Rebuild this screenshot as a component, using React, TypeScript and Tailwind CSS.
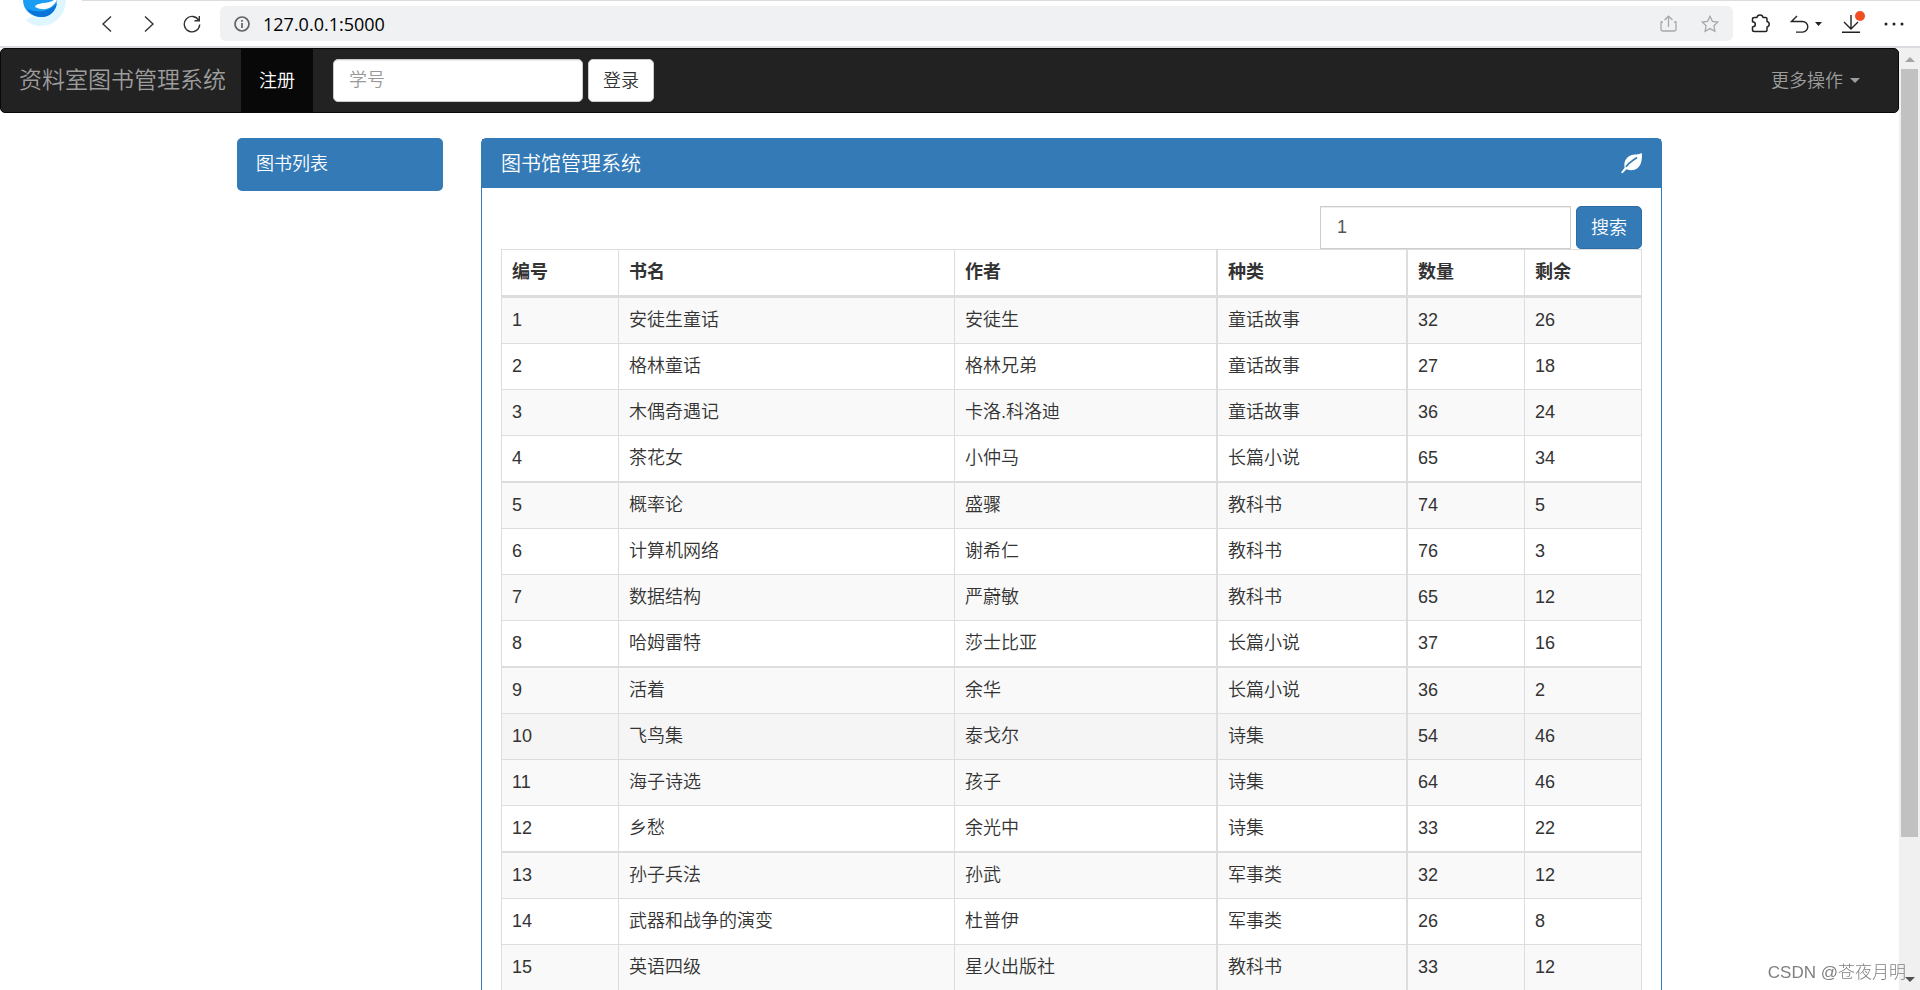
import { useState } from 'react';

interface Book {
  id: number;
  name: string;
  author: string;
  category: string;
  total: number;
  left: number;
}

const BOOKS: Book[] = [
  { id: 1, name: '安徒生童话', author: '安徒生', category: '童话故事', total: 32, left: 26 },
  { id: 2, name: '格林童话', author: '格林兄弟', category: '童话故事', total: 27, left: 18 },
  { id: 3, name: '木偶奇遇记', author: '卡洛.科洛迪', category: '童话故事', total: 36, left: 24 },
  { id: 4, name: '茶花女', author: '小仲马', category: '长篇小说', total: 65, left: 34 },
  { id: 5, name: '概率论', author: '盛骤', category: '教科书', total: 74, left: 5 },
  { id: 6, name: '计算机网络', author: '谢希仁', category: '教科书', total: 76, left: 3 },
  { id: 7, name: '数据结构', author: '严蔚敏', category: '教科书', total: 65, left: 12 },
  { id: 8, name: '哈姆雷特', author: '莎士比亚', category: '长篇小说', total: 37, left: 16 },
  { id: 9, name: '活着', author: '余华', category: '长篇小说', total: 36, left: 2 },
  { id: 10, name: '飞鸟集', author: '泰戈尔', category: '诗集', total: 54, left: 46 },
  { id: 11, name: '海子诗选', author: '孩子', category: '诗集', total: 64, left: 46 },
  { id: 12, name: '乡愁', author: '余光中', category: '诗集', total: 33, left: 22 },
  { id: 13, name: '孙子兵法', author: '孙武', category: '军事类', total: 32, left: 12 },
  { id: 14, name: '武器和战争的演变', author: '杜普伊', category: '军事类', total: 26, left: 8 },
  { id: 15, name: '英语四级', author: '星火出版社', category: '教科书', total: 33, left: 12 },
];

const COLUMNS = [
  { title: '编号', width: 'w-[118px]', line: 'border-l border-r' },
  { title: '书名', width: 'w-[336px]', line: 'border-r' },
  { title: '作者', width: 'w-[263px]', line: 'border-r-2' },
  { title: '种类', width: 'w-[190px]', line: 'border-r-2' },
  { title: '数量', width: 'w-[117px]', line: 'border-r' },
  { title: '剩余', width: 'w-[117px]', line: 'border-r' },
];

function BrowserBar() {
  const [url, setUrl] = useState('127.0.0.1:5000');

  return (
    <header className="relative flex h-12 shrink-0 items-center border-t border-b-2 border-t-[#dddddd] border-b-[#dcdce0] bg-white pr-4">
      {/* -top-px lets the logo cover the tab strip's line */}
      <svg className="absolute -top-px left-0 h-10 w-21" viewBox="0 0 84 40" aria-hidden="true">
        <path d="M0 0h82c-2 18-14 32-30 37H0z" fill="#ffffff" />
        <path d="M66 0c0 14-11 26-25 26-6 0-11-2-15-6 4-3 8-4 12-4 8 0 14-6 16-16z" fill="#dff5ff" />
        <path d="M23 0c0 10 8 17 18 17 9 0 15-7 16-17z" fill="#1a9df5" />
        <path d="M27 9c4 6 10 8 15 8 8 0 14-6 15-14-7 8-17 11-30 6z" fill="#0873d8" />
        <path d="M35 7c1-3 4-3 8-4 4 0 8-1 11-3h3c-4 8-12 12-22 7z" fill="#ffffff" />
      </svg>
      <div className="ml-24 flex items-center gap-[23px] text-[#333333]">
        <button aria-label="后退" className="p-px">
          <svg className="size-[18px]" viewBox="0 0 18 18" fill="none" stroke="currentColor" strokeWidth="1.4">
            <path d="M14 1.5 6 9l8 7.5" />
          </svg>
        </button>
        <button aria-label="前进" className="p-px">
          <svg className="size-[18px]" viewBox="0 0 18 18" fill="none" stroke="currentColor" strokeWidth="1.4">
            <path d="m5 1.5 8 7.5-8 7.5" />
          </svg>
        </button>
        <button aria-label="刷新" className="p-px">
          <svg className="size-[18px]" viewBox="0 0 18 18" fill="none" stroke="currentColor" strokeWidth="1.4">
            <path d="M15.8 5.5A7.7 7.7 0 1 0 16.7 9.5M16.3 1v4.7h-4.8" />
          </svg>
        </button>
      </div>
      <div className="ml-[18px] flex h-[35px] flex-1 items-center rounded-md bg-[#f0f1f3] px-[14px]">
        <svg className="size-4 shrink-0" viewBox="0 0 16 16" fill="none" stroke="#5f6368" strokeWidth="1.7" aria-hidden="true">
          <circle cx="8" cy="8" r="7" />
          <path d="M8 7v5M8 4v1.8" />
        </svg>
        <input
          aria-label="地址"
          value={url}
          onChange={(e) => setUrl(e.target.value)}
          className="ml-[13px] min-w-0 flex-1 bg-transparent font-['Open_Sans','Noto_Sans',sans-serif] text-lg font-normal text-black outline-none"
        />
        <button aria-label="分享" className="mr-6 text-[#a8a8a8]">
          <svg className="size-[17px]" viewBox="0 0 17 17" fill="none" stroke="currentColor" strokeWidth="1.3">
            <path d="M8.5 12V1.5M4.5 5l4-3.8 4 3.8M3 7H1v7q0 2 2 2h11q2 0 2-2V7h-2" />
          </svg>
        </button>
        <button aria-label="收藏" className="text-[#a8a8a8]">
          <svg className="size-[18px]" viewBox="0 0 18 18" fill="none" stroke="currentColor" strokeWidth="1.3">
            <path d="m9 1.3 2.4 5 5.5.7-4 3.8 1 5.5L9 13.6l-4.9 2.7 1-5.5-4-3.8 5.5-.7z" />
          </svg>
        </button>
      </div>
      <div className="ml-[18px] flex items-center gap-5 text-[#222222]">
        <button aria-label="扩展">
          <svg className="size-[19px]" viewBox="0 0 19 19" fill="none" stroke="currentColor" strokeWidth="1.5" strokeLinejoin="round">
            <path d="M3.5 3.5H6c.5-3.3 5.5-3.3 6 0h2.5q1.5 0 1.5 1.5v2.5c3 .6 3 5 0 5.5v3q0 1.5-1.5 1.5h-11Q1.5 17.5 1.5 16v-3c3.8-.3 3.8-5 0-5.3V5q0-1.5 2-1.5z" />
          </svg>
        </button>
        <button aria-label="撤销" className="flex items-center gap-[6px]">
          <svg className="h-[18px] w-[19px]" viewBox="0 0 19 18" fill="none" stroke="currentColor" strokeWidth="1.4">
            <path d="M7 1 1.5 6.5h11a5.3 5.3 0 0 1 0 10.6H6" />
          </svg>
          <svg className="h-1 w-[7px]" viewBox="0 0 7 4" fill="currentColor">
            <path d="M0 0h7L3.5 4z" />
          </svg>
        </button>
        <button aria-label="下载" className="relative">
          <svg className="size-[18px]" viewBox="0 0 18 18" fill="none" stroke="currentColor" strokeWidth="1.4">
            <path d="M9 0v14M2 7l7 7 7-7M0 17.3h18" />
          </svg>
          <span className="absolute -top-1 -right-[5px] size-[10px] rounded-full bg-[#f04e23]" />
        </button>
        <button aria-label="更多" className="ml-1">
          <svg className="h-1 w-5" viewBox="0 0 20 4" fill="currentColor">
            <circle cx="2" cy="2" r="1.5" />
            <circle cx="10" cy="2" r="1.5" />
            <circle cx="18" cy="2" r="1.5" />
          </svg>
        </button>
      </div>
    </header>
  );
}

function Navbar() {
  const [studentId, setStudentId] = useState('');

  return (
    <nav className="flex h-[65px] items-stretch rounded-[5px] border border-[#080808] bg-[#222222] text-[#9d9d9d]">
      <a href="#" className="flex items-center pr-[15px] pl-[18px] text-[23px]">
        资料室图书管理系统
      </a>
      <a href="#register" className="flex items-center bg-[#080808] px-[18px] text-white">
        注册
      </a>
      <form className="ml-5 flex items-center gap-[5px]" onSubmit={(e) => e.preventDefault()}>
        <input
          aria-label="学号"
          placeholder="学号"
          value={studentId}
          onChange={(e) => setStudentId(e.target.value)}
          className="h-[43px] w-[250px] rounded-[5px] border border-[#cccccc] bg-white px-[15px] text-[#555555] shadow-[inset_0_1px_1px_rgba(0,0,0,0.075)] outline-none placeholder:text-[#999999]"
        />
        <button className="h-[43px] rounded-[5px] border border-[#cccccc] bg-white px-[14px] text-[#333333]">登录</button>
      </form>
      <button className="ml-auto flex items-center gap-[7px] pr-[38px]">
        更多操作
        <svg className="h-[5px] w-[10px]" viewBox="0 0 10 5" fill="currentColor" aria-hidden="true">
          <path d="M0 0h10L5 5z" />
        </svg>
      </button>
    </nav>
  );
}

function BookTable() {
  return (
    <table className="w-full table-fixed border-separate border-spacing-0 text-left">
      <thead>
        <tr>
          {COLUMNS.map((col) => (
            <th
              key={col.title}
              className={`${col.width} ${col.line} border-t border-b-3 border-[#dddddd] p-[10px] leading-[25px] font-bold`}
            >
              {col.title}
            </th>
          ))}
        </tr>
      </thead>
      <tbody>
        {BOOKS.map((book) => {
          const bottom = book.id % 4 === 0 ? 'border-b-2' : 'border-b';
          const background = book.id === 10 ? 'bg-[#f5f5f5]' : book.id % 2 ? 'bg-[#f9f9f9]' : 'bg-white';
          const cells = [book.id, book.name, book.author, book.category, book.total, book.left];
          return (
            <tr key={book.id} className={`${background} hover:bg-[#f5f5f5]`}>
              {cells.map((cell, i) => (
                <td key={i} className={`${COLUMNS[i].line} ${bottom} border-[#dddddd] p-[10px] leading-[25px]`}>
                  {cell}
                </td>
              ))}
            </tr>
          );
        })}
      </tbody>
    </table>
  );
}

function LibraryPanel() {
  const [keyword, setKeyword] = useState('1');

  return (
    <section className="min-w-0 flex-1 rounded-[5px] border border-[#337ab7] bg-white">
      <div className="flex h-[49px] items-center justify-between bg-[#337ab7] px-[19px] text-white">
        <h3 className="text-xl">图书馆管理系统</h3>
        <svg className="size-[21px]" viewBox="0 0 21 21" aria-hidden="true">
          <path
            d="M20.8 0C21.3 6 20.5 12 16.5 15.3 13.5 17.6 9 17.6 5.5 16.3L1.5 20.3 0 19.5 3.6 14.7C2.6 9 5 4.5 9.5 2.5 13 1 17.500 2 20.8 0z"
            fill="currentColor"
          />
          <path d="M5 13.8C8 9 12 7.5 16 4.5" fill="none" stroke="#337ab7" strokeWidth="1.6" />
        </svg>
      </div>
      <div className="px-[19px] pt-[18px] pb-[19px]">
        <form className="flex justify-end gap-[5px]" onSubmit={(e) => e.preventDefault()}>
          <input
            aria-label="关键字"
            value={keyword}
            onChange={(e) => setKeyword(e.target.value)}
            className="h-[43px] w-[251px] border border-[#cccccc] px-4 text-[#555555] shadow-[inset_0_1px_1px_rgba(0,0,0,0.075)] outline-none"
          />
          <button className="h-[43px] rounded-[5px] border border-[#2e6da4] bg-[#337ab7] px-[14px] text-white">搜索</button>
        </form>
        <BookTable />
      </div>
    </section>
  );
}

function Scrollbar() {
  return (
    <div className="flex w-[21px] shrink-0 flex-col items-center bg-[#f0f0f0]" aria-hidden="true">
      <svg className="mt-[9px] mb-[7px] h-[5px] w-[10px] shrink-0" viewBox="0 0 10 5" fill="#a3a3a3">
        <path d="M0 5h10L5 0z" />
      </svg>
      <div className="h-[768px] w-[17px] bg-[#c1c1c1]" />
      <svg className="mt-auto mb-2 h-[5px] w-[10px] shrink-0" viewBox="0 0 10 5" fill="#505050">
        <path d="M0 0h10L5 5z" />
      </svg>
    </div>
  );
}

export default function App() {
  return (
    <div className="flex h-screen flex-col overflow-hidden bg-white font-['Liberation_Sans','Noto_Sans_CJK_SC',sans-serif] text-lg font-[350] text-[#333333]">
      <BrowserBar />
      <div className="flex min-h-0 flex-1">
        <main className="min-w-0 flex-1 overflow-hidden">
          <Navbar />
          <div className="mx-auto mt-[25px] flex max-w-[1425px] items-start gap-[38px]">
            <aside className="w-[206px] shrink-0">
              <a href="#books" className="block h-[53px] rounded-[5px] bg-[#337ab7] px-[19px] py-[13px] leading-[27px] text-white">
                图书列表
              </a>
            </aside>
            <LibraryPanel />
          </div>
        </main>
        <Scrollbar />
      </div>
      <p className="fixed right-[14px] bottom-1 text-[17px] font-light text-[#808080]">CSDN @苍夜月明</p>
    </div>
  );
}
